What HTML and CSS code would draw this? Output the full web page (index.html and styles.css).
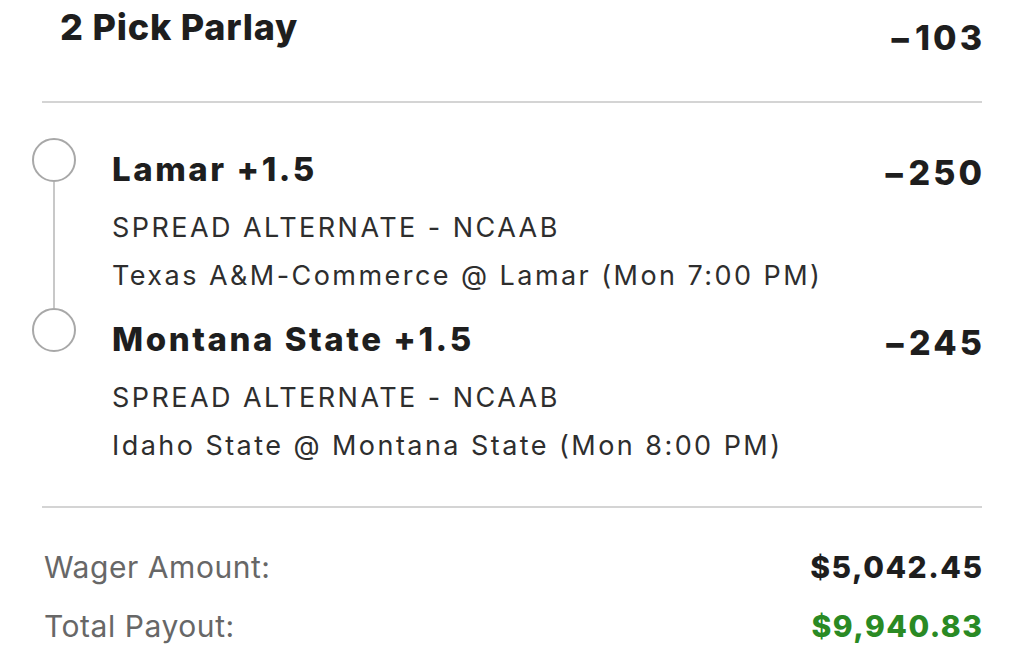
FILE: index.html
```html
<!DOCTYPE html>
<html>
<head>
<meta charset="utf-8">
<link rel="stylesheet" href="styles.css">
</head>
<body>
<div class="slip">
  <div class="header">
    <div class="title">2 Pick Parlay</div>
    <div class="odds odds-main">−103</div>
  </div>
  <div class="divider"></div>
  <div class="legs">
    <div class="leg">
      <div class="track"><span class="dot"></span><span class="line"></span></div>
      <div class="info">
        <div class="pick">Lamar +1.5</div>
        <div class="sub">SPREAD ALTERNATE - NCAAB</div>
        <div class="sub">Texas A&amp;M-Commerce @ Lamar (Mon 7:00 PM)</div>
      </div>
      <div class="odds odds-leg">−250</div>
    </div>
    <div class="leg">
      <div class="track"><span class="dot"></span></div>
      <div class="info">
        <div class="pick">Montana State +1.5</div>
        <div class="sub">SPREAD ALTERNATE - NCAAB</div>
        <div class="sub">Idaho State @ Montana State (Mon 8:00 PM)</div>
      </div>
      <div class="odds odds-leg">−245</div>
    </div>
  </div>
  <div class="divider"></div>
  <div class="totals">
    <div class="row"><span class="label">Wager Amount:</span><span class="amount">$5,042.45</span></div>
    <div class="row"><span class="label">Total Payout:</span><span class="amount payout">$9,940.83</span></div>
  </div>
</div>
</body>
</html>
```
FILE: styles.css
```css
html, body {
  margin: 0;
  padding: 0;
  background: #ffffff;
}
body {
  font-family: Inter, "Noto Sans", "Liberation Sans", sans-serif;
  color: #1e1e1e;
  width: 1024px;
  height: 652px;
  overflow: hidden;
}
.slip {
  padding: 0 42px;
}
.header {
  display: flex;
  justify-content: space-between;
  align-items: flex-start;
  height: 101px;
}
.title {
  font-size: 36px;
  font-weight: 800;
  line-height: 44px;
  margin-top: 5px;
  padding-left: 18px;
  letter-spacing: 0.8px;
}
.odds {
  font-size: 34px;
  font-weight: 800;
  line-height: 40px;
  letter-spacing: 3.1px;
  margin-right: -3.1px;
}
.odds-main {
  margin-top: 18px;
}
.divider {
  height: 2px;
  background: #d4d4d4;
}
.legs {
  margin-left: -10px;
  padding-top: 35px;
}
.leg {
  display: grid;
  grid-template-columns: 44px 1fr auto;
  column-gap: 36px;
}
.leg:last-child .info {
  padding-bottom: 36px;
}
.track {
  display: flex;
  flex-direction: column;
  align-items: center;
}
.dot {
  width: 40px;
  height: 40px;
  border: 2px solid #a8a8a8;
  border-radius: 50%;
  flex: none;
}
.line {
  width: 2px;
  flex: 1;
  background: #c8c8c8;
}
.info {
  padding-top: 11px;
  padding-bottom: 8px;
}
.pick {
  font-size: 33px;
  font-weight: 800;
  line-height: 40px;
  letter-spacing: 2.55px;
}
.sub {
  font-size: 27px;
  line-height: 48px;
  color: #2e2e2e;
  letter-spacing: 2.45px;
}
.pick + .sub {
  margin-top: 15px;
}
.odds-leg {
  padding-top: 15px;
}
.totals {
  padding-top: 30px;
}
.row {
  display: flex;
  justify-content: space-between;
  align-items: baseline;
  line-height: 59px;
}
.label {
  font-size: 30px;
  color: #676767;
  padding-left: 2px;
  letter-spacing: 0.55px;
}
.amount {
  font-size: 30px;
  font-weight: 800;
  letter-spacing: 1.5px;
  margin-right: -1.5px;
  color: #1e1e1e;
}
.payout {
  color: #2a8a24;
}
```
